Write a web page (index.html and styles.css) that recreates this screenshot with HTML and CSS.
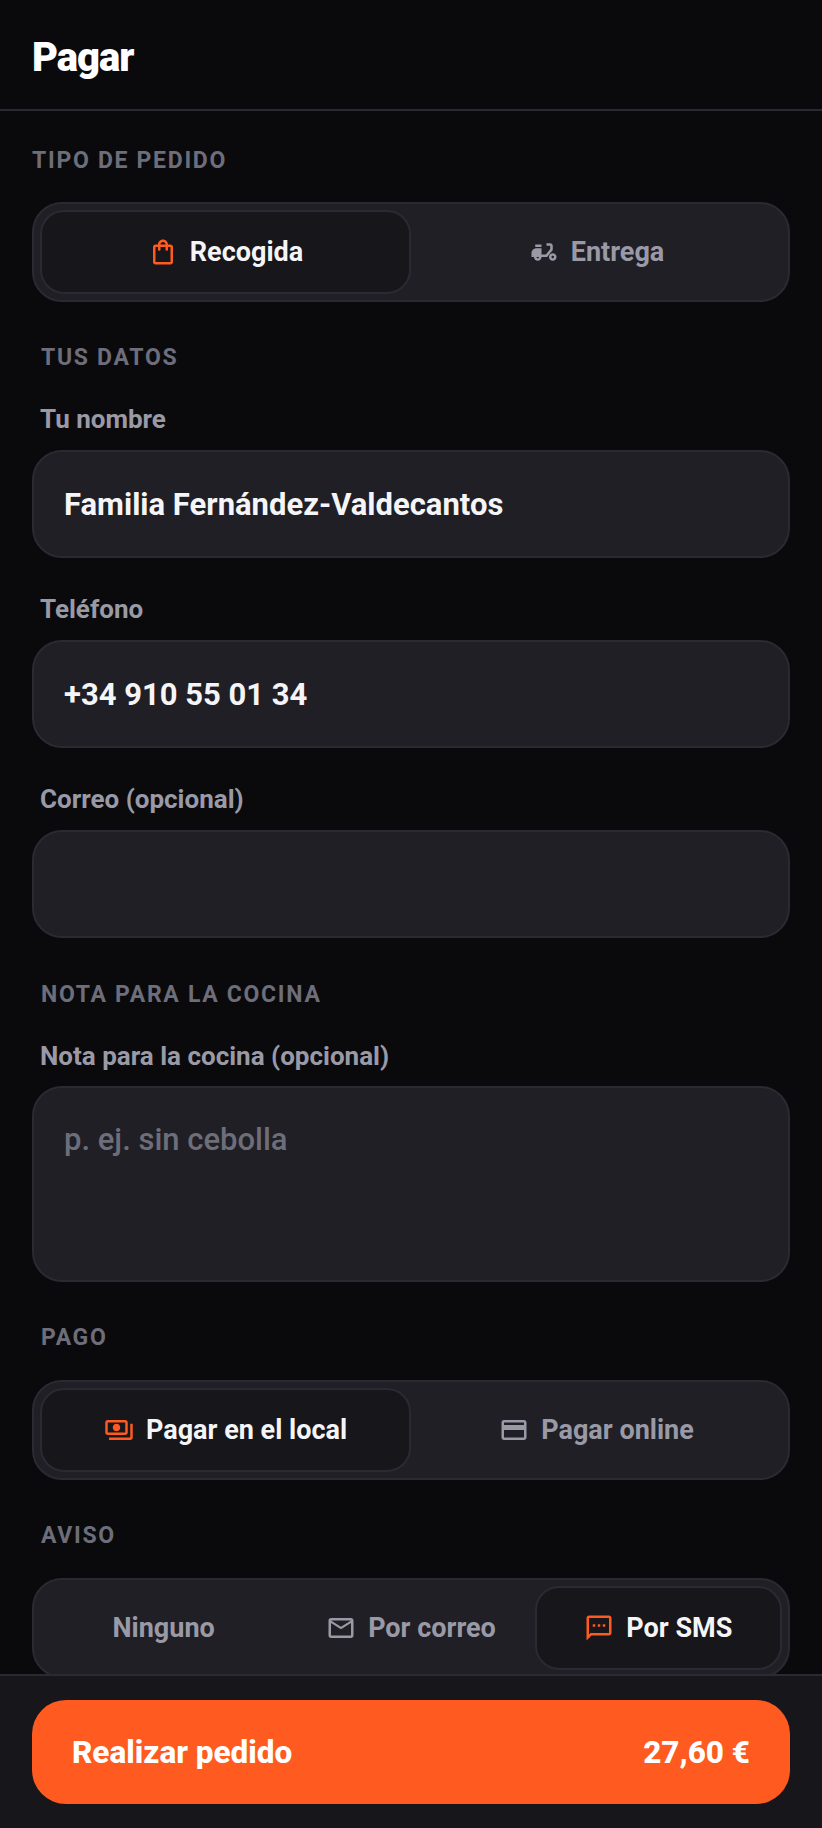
FILE: index.html
```html
<!DOCTYPE html>
<html lang="es">
<head>
    <meta charset="UTF-8">
    <meta name="viewport" content="width=device-width, initial-scale=1.0">
    <title>Pagar</title>
    <link rel="stylesheet" href="styles.css">
</head>
<body>
    <div class="app">
        <header class="top-bar">
            <h1>Pagar</h1>
        </header>

        <main class="checkout">
            <div class="section-title first">TIPO DE PEDIDO</div>
            <div class="segment two">
                <button class="seg-option active">
                    <svg class="icon" viewBox="0 0 24 24"><path d="M18 6h-2c0-2.21-1.79-4-4-4S8 3.79 8 6H6c-1.1 0-2 .9-2 2v12c0 1.1.9 2 2 2h12c1.1 0 2-.9 2-2V8c0-1.1-.9-2-2-2zm-6-2c1.1 0 2 .9 2 2h-4c0-1.1.9-2 2-2zm6 16H6V8h2v2c0 .55.45 1 1 1s1-.45 1-1V8h4v2c0 .55.45 1 1 1s1-.45 1-1V8h2v12z"/></svg>
                    Recogida
                </button>
                <button class="seg-option">
                    <svg class="icon" viewBox="0 0 24 24"><path d="M19 7c0-1.1-.9-2-2-2h-3v2h3v2.65L13.52 14H10V9H6c-2.21 0-4 1.79-4 4v3h2c0 1.66 1.34 3 3 3s3-1.34 3-3h4.48L19 10.35V7zM7 17c-.55 0-1-.45-1-1h2c0 .55-.45 1-1 1z"/><path d="M5 6h5v2H5zm14 7c-1.66 0-3 1.34-3 3s1.34 3 3 3 3-1.34 3-3-1.34-3-3-3zm0 4c-.55 0-1-.45-1-1s.45-1 1-1 1 .45 1 1-.45 1-1 1z"/></svg>
                    Entrega
                </button>
            </div>

            <div class="section-title">TUS DATOS</div>
            <label class="field-label first">Tu nombre</label>
            <input class="text-input" type="text" value="Familia Fernández-Valdecantos">
            <label class="field-label">Teléfono</label>
            <input class="text-input" type="text" value="+34 910 55 01 34">
            <label class="field-label">Correo (opcional)</label>
            <input class="text-input" type="text">

            <div class="section-title note-title">NOTA PARA LA COCINA</div>
            <label class="field-label note">Nota para la cocina (opcional)</label>
            <textarea class="text-area" placeholder="p. ej. sin cebolla"></textarea>

            <div class="section-title">PAGO</div>
            <div class="segment two">
                <button class="seg-option active">
                    <svg class="icon" viewBox="0 0 24 24"><path d="M19 14V6c0-1.1-.9-2-2-2H3c-1.1 0-2 .9-2 2v8c0 1.1.9 2 2 2h14c1.1 0 2-.9 2-2zm-2 0H3V6h14v8zm-7-7c-1.66 0-3 1.34-3 3s1.34 3 3 3 3-1.34 3-3-1.34-3-3-3zm13 0v11c0 1.1-.9 2-2 2H4v-2h17V7h2z"/></svg>
                    Pagar en el local
                </button>
                <button class="seg-option">
                    <svg class="icon" viewBox="0 0 24 24"><path d="M20 4H4c-1.11 0-1.99.89-1.99 2L2 18c0 1.11.89 2 2 2h16c1.11 0 2-.89 2-2V6c0-1.11-.89-2-2-2zm0 14H4v-6h16v6zm0-10H4V6h16v2z"/></svg>
                    Pagar online
                </button>
            </div>

            <div class="section-title">AVISO</div>
            <div class="segment three">
                <button class="seg-option">Ninguno</button>
                <button class="seg-option">
                    <svg class="icon" viewBox="0 0 24 24"><path d="M20 4H4c-1.1 0-1.99.9-1.99 2L2 18c0 1.1.9 2 2 2h16c1.1 0 2-.9 2-2V6c0-1.1-.9-2-2-2zm0 14H4V8l8 5 8-5v10zm-8-7L4 6h16l-8 5z"/></svg>
                    Por correo
                </button>
                <button class="seg-option active">
                    <svg class="icon" viewBox="0 0 24 24"><path d="M20 2H4c-1.1 0-1.99.9-1.99 2L2 22l4-4h14c1.1 0 2-.9 2-2V4c0-1.1-.9-2-2-2zm0 14H5.17L4 17.17V4h16v12zM7 9h2v2H7zm4 0h2v2h-2zm4 0h2v2h-2z"/></svg>
                    Por SMS
                </button>
            </div>
        </main>

        <footer class="order-bar">
            <button class="order-button">
                <span>Realizar pedido</span>
                <span>27,60 €</span>
            </button>
        </footer>
    </div>
</body>
</html>
```

FILE: styles.css
```css
* {
    box-sizing: border-box;
}
body {
    font-family: Roboto, "Liberation Sans", sans-serif;
    background-color: #0a0a0d;
    color: #f5f5f7;
    margin: 0;
    padding: 0;
}
button, input, textarea {
    font-family: inherit;
}
.app {
    height: 100vh;
    display: flex;
    flex-direction: column;
}
.top-bar {
    height: 111px;
    flex: none;
    padding: 6px 32px 0;
    display: flex;
    align-items: center;
    border-bottom: 2px solid #2a2a32;
}
.top-bar h1 {
    margin: 0;
    font-size: 40px;
    font-weight: 900;
    letter-spacing: -1px;
    color: #fff;
}
.checkout {
    flex: 1;
    min-height: 0;
    overflow: hidden;
    padding: 0 32px;
}
.section-title {
    margin: 43px 9px 0;
    height: 26px;
    line-height: 26px;
    font-size: 23px;
    font-weight: 700;
    letter-spacing: 1.7px;
    color: #6e6e7a;
}
.section-title.first {
    margin: 37px 0 0;
}
.section-title.note-title {
    margin-top: 44px;
}
.section-title.first + .segment {
    margin-top: 28px;
}
.segment {
    display: grid;
    height: 100px;
    margin-top: 29px;
    padding: 6px;
    background-color: #201f26;
    border: 2px solid #2a2a32;
    border-radius: 30px;
}
.segment.two {
    grid-template-columns: 1fr 1fr;
}
.segment.three {
    grid-template-columns: 1fr 1fr 1fr;
}
.seg-option {
    display: flex;
    align-items: center;
    justify-content: center;
    gap: 12px;
    background: none;
    border: 2px solid transparent;
    border-radius: 24px;
    font-size: 27px;
    font-weight: 700;
    color: #9a9aa6;
    padding: 0;
}
.seg-option.active {
    background-color: #16161b;
    border-color: #2a2a32;
    color: #f5f5f7;
}
.icon {
    width: 30px;
    height: 30px;
    fill: currentColor;
    flex: none;
}
.seg-option.active .icon {
    fill: #ff5a1f;
}
.field-label {
    display: block;
    margin: 35px 8px 0;
    height: 32px;
    line-height: 32px;
    font-size: 26px;
    font-weight: 700;
    color: #9a9aa6;
}
.field-label.first {
    margin-top: 32px;
}
.field-label.note {
    margin-top: 32px;
}
.text-input, .text-area {
    display: block;
    width: 100%;
    margin-top: 15px;
    padding: 0 30px;
    background-color: #201f26;
    border: 2px solid #2a2a32;
    border-radius: 30px;
    color: #f5f5f7;
    font-size: 31px;
    font-weight: 700;
    outline: none;
}
.text-input {
    height: 108px;
}
.text-area {
    height: 196px;
    margin-top: 14px;
    padding: 34px 30px;
    resize: none;
    line-height: 36px;
}
.text-area::placeholder {
    color: #6e6e7a;
    font-weight: 500;
    opacity: 1;
}
.order-bar {
    flex: none;
    height: 154px;
    padding: 24px 32px;
    background-color: #16161b;
    border-top: 2px solid #2a2a32;
}
.order-button {
    width: 100%;
    height: 104px;
    padding: 0 40px;
    display: flex;
    align-items: center;
    justify-content: space-between;
    background-color: #ff5a1f;
    border: none;
    border-radius: 34px;
    color: #fff;
    font-size: 31.5px;
    font-weight: 800;
}
```
